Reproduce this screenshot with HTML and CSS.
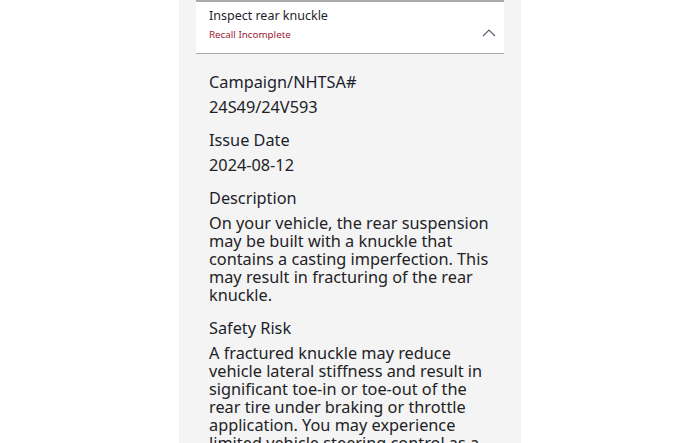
FILE: index.html
```html
<!DOCTYPE html>
<html>
<head>
<meta charset="utf-8">
<link rel="stylesheet" href="styles.css">
</head>
<body>
<div class="column">
  <div class="card">
    <div class="card-text">
      <div class="card-title">Inspect rear knuckle</div>
      <div class="card-status">Recall Incomplete</div>
    </div>
    <svg class="chevron" width="14" height="8" viewBox="0 0 14 8"><path d="M1 7 L7 1 L13 7" fill="none" stroke="#5a6470" stroke-width="1.2"/></svg>
  </div>
  <div class="details">
    <div class="label">Campaign/NHTSA#</div>
    <div class="value">24S49/24V593</div>
    <div class="label">Issue Date</div>
    <div class="value">2024-08-12</div>
    <div class="label">Description</div>
    <div class="value">On your vehicle, the rear suspension may be built with a knuckle that contains a casting imperfection. This may result in fracturing of the rear knuckle.</div>
    <div class="label">Safety Risk</div>
    <div class="value">A fractured knuckle may reduce vehicle lateral stiffness and result in significant toe-in or toe-out of the rear tire under braking or throttle application. You may experience limited vehicle steering control as a result.</div>
  </div>
</div>
</body>
</html>
```

FILE: styles.css
```css
html, body {
  margin: 0;
  padding: 0;
  background: #ffffff;
  height: 443px;
  overflow: hidden;
}
body {
  font-family: "Noto Sans", "Open Sans", sans-serif;
  color: #1d1e2c;
}
.column {
  margin-left: 179px;
  width: 342px;
  height: 443px;
  background: #f4f4f4;
  overflow: hidden;
}
.card {
  margin-left: 17px;
  width: 308px;
  box-sizing: border-box;
  height: 54px;
  background: #ffffff;
  border-top: 2px solid #a9a9a9;
  border-bottom: 1.5px solid #a9a9a9;
  display: flex;
  align-items: flex-start;
  justify-content: space-between;
  padding: 5px 8px 0 13px;
}
.card-title {
  font-size: 12.5px;
  line-height: 17px;
  color: #1d1e2c;
}
.card-status {
  margin-top: 3.5px;
  font-size: 9.8px;
  line-height: 14px;
  color: #9b2335;
}
.chevron {
  margin-top: 22px;
}
.details {
  padding: 16.7px 31px 0 30px;
}
.label {
  font-size: 16.3px;
  line-height: 22px;
  margin-top: 13px;
}
.label:first-child {
  margin-top: 0;
}
.value {
  font-size: 16.3px;
  line-height: 18px;
  margin-top: 5.2px;
  color: #222226;
}
```
